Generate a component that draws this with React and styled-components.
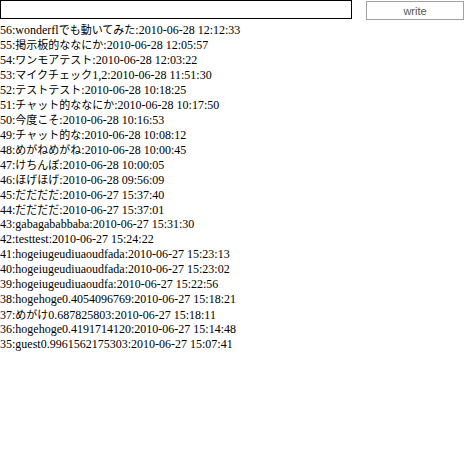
import React, { useState } from "react";
import styled, { createGlobalStyle } from "styled-components";

const GlobalStyle = createGlobalStyle`
	html, body {
		margin: 0;
		padding: 0;
		background: #ffffff;
	}
`;

const Page = styled.div`
	width: 465px;
	height: 465px;
	background: #ffffff;
	font-family: "Liberation Serif", "Noto Sans CJK JP", serif;
	color: #000000;
`;

const Toolbar = styled.div`
	display: flex;
	align-items: flex-start;
	height: 21px;
`;

const InputForm = styled.input`
	box-sizing: border-box;
	width: 352px;
	height: 19px;
	margin: 0;
	border: 1px solid #000000;
	outline: none;
	padding: 0 3px;
	font-size: 12px;
`;

const WriteButton = styled.button`
	box-sizing: border-box;
	width: 98px;
	height: 19px;
	margin: 1px 0 0 14px;
	border: 1px solid #a0a0a0;
	background: #ffffff;
	color: #555555;
	font-family: "Liberation Sans", Arial, sans-serif;
	font-size: 11px;
	padding: 0;
	cursor: pointer;
`;

const LogList = styled.div`
	display: flex;
	flex-direction: column;
	padding-top: 1px;
`;

const LogRow = styled.div`
	font-size: 12px;
	line-height: 15px;
	height: 15px;
	white-space: nowrap;
`;

const Jp = styled.span`
	font-family: "Noto Sans CJK JP", sans-serif;
	font-size: 11px;
`;

const logs = [
	["56", "wonderfl", "でも動いてみた", "2010-06-28 12:12:33"],
	["55", "", "掲示板的ななにか", "2010-06-28 12:05:57"],
	["54", "", "ワンモアテスト", "2010-06-28 12:03:22"],
	["53", "", "マイクチェック", "2010-06-28 11:51:30", "1,2"],
	["52", "", "テストテスト", "2010-06-28 10:18:25"],
	["51", "", "チャット的ななにか", "2010-06-28 10:17:50"],
	["50", "", "今度こそ", "2010-06-28 10:16:53"],
	["49", "", "チャット的な", "2010-06-28 10:08:12"],
	["48", "", "めがねめがね", "2010-06-28 10:00:45"],
	["47", "", "けちんぼ", "2010-06-28 10:00:05"],
	["46", "", "ほげほげ", "2010-06-28 09:56:09"],
	["45", "", "だだだだ", "2010-06-27 15:37:40"],
	["44", "", "だだだだ", "2010-06-27 15:37:01"],
	["43", "gabagababbaba", "", "2010-06-27 15:31:30"],
	["42", "testtest", "", "2010-06-27 15:24:22"],
	["41", "hogeiugeudiuaoudfada", "", "2010-06-27 15:23:13"],
	["40", "hogeiugeudiuaoudfada", "", "2010-06-27 15:23:02"],
	["39", "hogeiugeudiuaoudfa", "", "2010-06-27 15:22:56"],
	["38", "hogehoge0.4054096769", "", "2010-06-27 15:18:21"],
	["37", "", "めがけ", "2010-06-27 15:18:11", "0.687825803"],
	["36", "hogehoge0.4191714120", "", "2010-06-27 15:14:48"],
	["35", "guest0.9961562175303", "", "2010-06-27 15:07:41"],
];

const App = () => {
	const [text, setText] = useState("");

	return (
		<Page>
			<GlobalStyle />
			<Toolbar>
				<InputForm value={text} onChange={(e) => setText(e.target.value)} />
				<WriteButton>write</WriteButton>
			</Toolbar>
			<LogList>
				{logs.map(([no, pre, jp, date, post]) => (
					<LogRow key={no}>
						{no}:{pre}
						{jp && <Jp>{jp}</Jp>}
						{post}:{date}
					</LogRow>
				))}
			</LogList>
		</Page>
	);
};

export default App;
